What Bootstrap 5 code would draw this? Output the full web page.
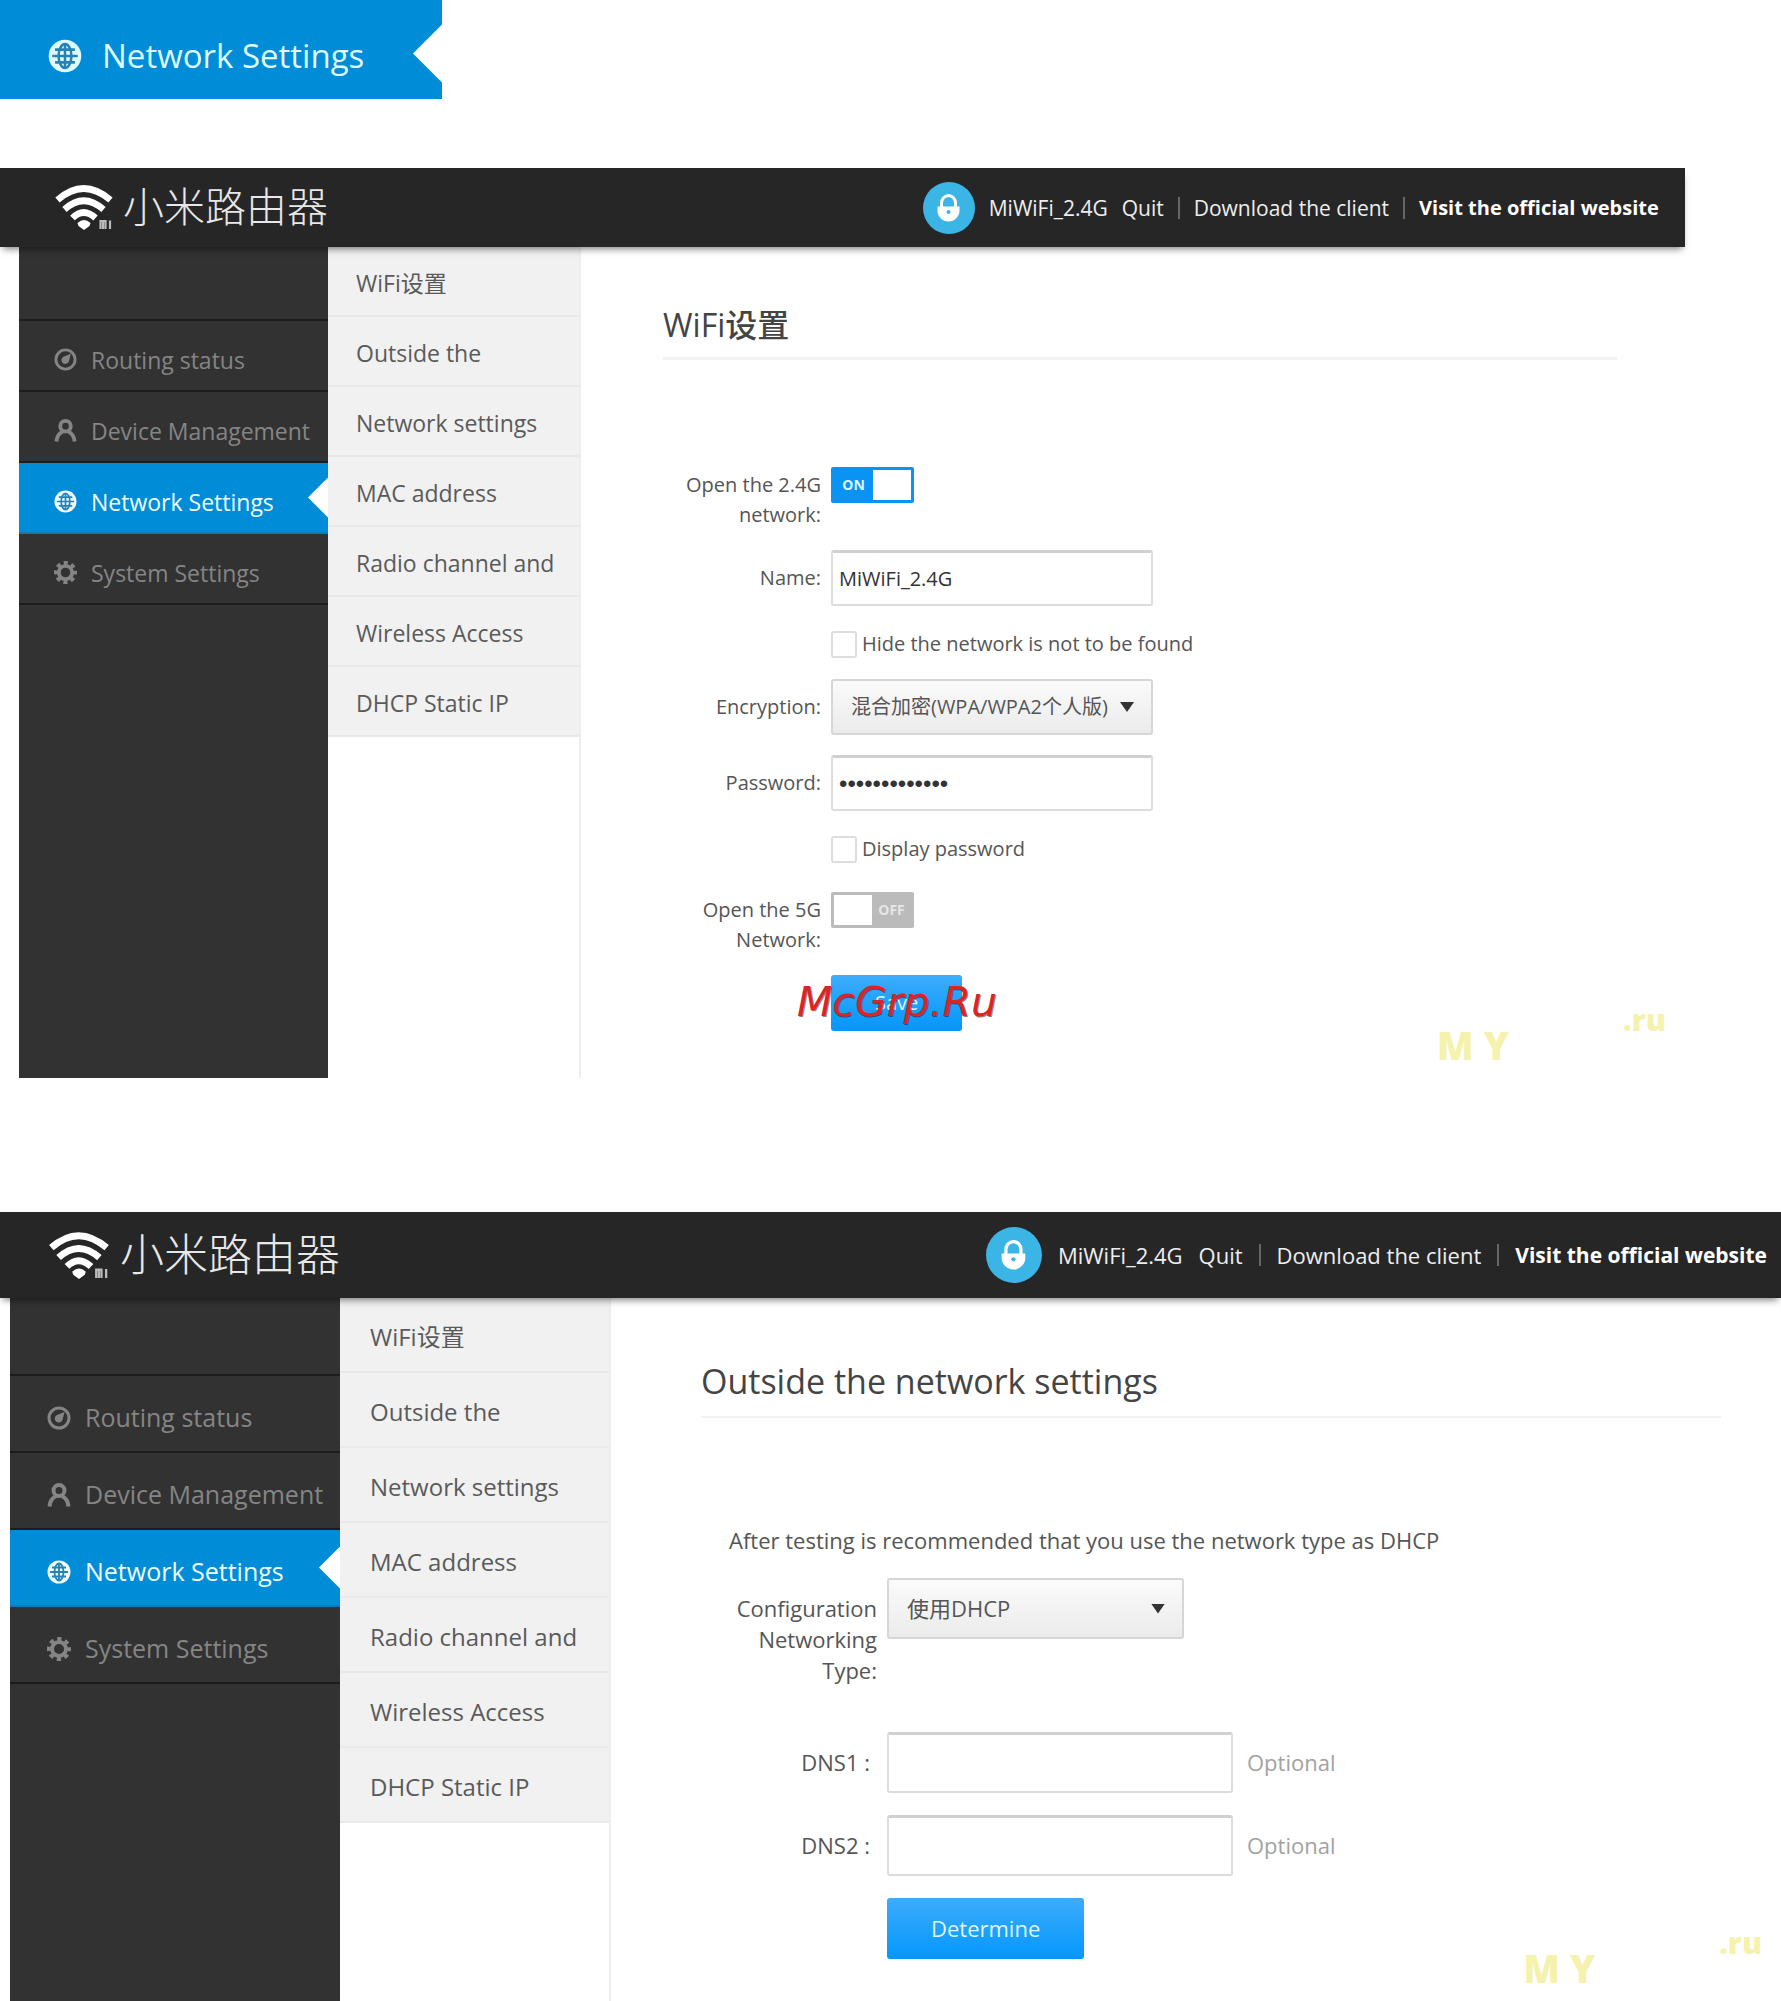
<!DOCTYPE html>
<html lang="en">
<head>
<meta charset="utf-8">
<meta name="viewport" content="width=device-width, initial-scale=1">
<title>Network Settings</title>
<link href="https://cdn.jsdelivr.net/npm/bootstrap@5.3.0/dist/css/bootstrap.min.css" rel="stylesheet">
<style>
  body { font-family: "Open Sans", "Noto Sans CJK SC", sans-serif; background: #fff; color: #555; }
  a { text-decoration: none; color: inherit; }
  svg { flex: none; }

  .crumb { background: #008cd7; color: #dffaff; width: 442px; height: 99px; padding: 13px 0 0 48px; font-size: 33px; gap: 20px; }
  .notched { position: relative; }
  .notched::after { content: ""; position: absolute; right: 0; top: calc(50% + var(--notch-shift, 0px)); width: var(--notch); height: calc(var(--notch) * 2); transform: translateY(-50%); background: #fff; clip-path: polygon(100% 0, 0 50%, 100% 100%); }

  .router { --text: 20px; --toptext: 21px; --topbold: 20px; --label: 158px; --bar: 79px; --row: 71px; --side: 309px; --sub: 253px; --nav: 23px; --subnav: 23px; --edge: 19px; --field: 56px; --lh: 30px; --gap: 20px; --notch: 20px; font-size: var(--text); line-height: var(--lh); }
  .router-wide { --text: 22px; --toptext: 22px; --topbold: 21px; --label: 176px; --bar: 86px; --row: 77px; --side: 330px; --sub: 271px; --nav: 25px; --subnav: 24px; --edge: 10px; --field: 61px; --lh: 31px; --gap: 22px; --notch: 21px; }
  .router-narrow { width: 94.6%; margin-top: 69px; min-height: 910px; }
  .router-wide { margin-top: 134px; }

  .topbar { background: #262626; color: #eee; height: var(--bar); position: relative; z-index: 2; box-shadow: 0 5px 7px -3px rgba(0,0,0,.5); padding: 0 26px 0 55px; }
  .router-wide .topbar { padding: 0 14px 0 48px; }
  .brand { font-family: "Noto Sans CJK SC", sans-serif; font-weight: 300; font-size: 41px; line-height: 50px; color: #e8e8e8; gap: 10px; }
  .brand span { padding-bottom: 7px; }
  .router-wide .brand { font-size: 44px; }
  .user { gap: 14px; font-size: var(--toptext); }
  .router-wide .user { gap: 16px; }
  .user .fw-bold { font-size: var(--topbold); }
  .sep { width: 2px; height: 22px; background: #666; }

  .side { width: var(--side); margin-left: var(--edge); background: #323232; color: #858585; font-size: var(--nav); }
  .side > * { height: var(--row); border-bottom: 2px solid #1d1d1d; }
  .side > .blank { height: calc(var(--row) + 3px); }
  .router-wide .side > .blank { height: calc(var(--row) + 1px); }
  .side a { gap: 14px; padding: 8px 0 0 35px; white-space: nowrap; }
  .router-wide .side a { padding-left: 37px; }
  .side a.current { background: #008cd7; color: #effcff; border-bottom-color: #0a7bb8; }
  .sub { width: var(--sub); border-right: 2px solid #eee; font-size: var(--subnav); color: #5a5a5a; }
  .sub a { height: calc(var(--row) - 1px); background: #f1f1f1; border-bottom: 2px solid #e9e9e9; padding: 4px 0 0 28px; }
  .router-wide .sub a { height: calc(var(--row) - 2px); padding-left: 30px; }

  .pane { margin: 54px 68px 0 82px; }
  .router-wide .pane { margin: 58px 60px 0 90px; }
  .pane h1 { font-size: 32px; line-height: 48px; color: #444; margin: 0; padding-bottom: 8px; border-bottom: 3px solid #f2f2f2; }
  .router-wide .pane h1 { font-size: 34px; line-height: 50px; padding-bottom: 10px; border-width: 2px; }
  .pane form { margin-top: 107px; gap: var(--gap); }
  .router-wide .pane form { margin-top: 107px; }
  .line { gap: 10px; }
  .caption { width: var(--label); text-align: right; flex: none; }
  .router-narrow .caption { padding: 13px 0; }
  .router-narrow .caption.two { padding: 3px 0 0 18px; }
  .router-wide .caption { padding: 15px 0 0 20px; }
  .router-wide .dns { padding-right: 7px; }
  .field { height: var(--field); border: 2px solid #dcdcdc; border-top: 3px solid #d0d0d0; border-radius: 3px; padding: 0 6px; font-size: var(--text); color: #333; }
  .w-a { width: 322px; } .w-b { width: 346px; } .w-c { width: 297px; }
  .secret { font-family: "Liberation Sans", sans-serif; font-size: 24px; }
  .picker { position: relative; }
  .picker select { appearance: none; width: 100%; background: linear-gradient(#fbfbfb, #ebebeb); border: 2px solid #d6d6d6; padding: 0 42px 0 18px; color: #555; overflow: hidden; }
  .picker::after { content: ""; position: absolute; right: 19px; top: calc(50% - 5px); width: 14px; height: 10px; background: #333; clip-path: polygon(0 0, 100% 0, 50% 100%); pointer-events: none; }
  .tick { padding-top: 2px; margin-left: calc(var(--label) + 10px); height: 33px; gap: 5px; }
  .tick input { appearance: none; width: 26px; height: 27px; border: 2px solid #ddd; border-radius: 3px; background: #fff; margin: 2px 0 0; }
  .toggle { width: 83px; height: 36px; border: 3px solid #0a93f2; background: #0a93f2; border-radius: 2px; color: #d9f5ff; font-size: 14px; font-weight: 700; }
  .toggle input { appearance: none; width: 38px; background: #fff; margin: 0; }
  .toggle span { width: 39px; text-align: center; }
  .toggle.off { background: #bbb; border-color: #bbb; color: #e6e6e6; flex-direction: row-reverse; }
  .go { height: var(--field); margin-left: calc(var(--label) + 10px); padding: 0 44px; border: 0; border-radius: 3px; background: linear-gradient(#3dacfd, #0397fc); color: #dff5ff; font-size: var(--text); }
  .optional { color: #a2a2a2; }
  .stamp { position: absolute; left: -34px; top: 0; font: italic 41px/54px "DejaVu Sans", sans-serif; color: #dc2424; text-shadow: 1px 1px 0 rgba(60,0,0,.5); pointer-events: none; margin-left: calc(var(--label) + 10px); }
  .faint { position: absolute; right: 19px; bottom: 12px; gap: 114px; color: #f5f2ae; font-weight: 800; pointer-events: none; }
  .router-wide .faint { gap: 124px; }
  .faint b { font-size: 38px; line-height: 42px; }
  .faint i { font: 800 30px/24px "Open Sans", sans-serif; }
</style>
</head>
<body class="d-flex flex-column min-vh-100">

<svg class="d-none" aria-hidden="true">
  <symbol id="globe" viewBox="0 0 24 24">
    <circle cx="12" cy="12" r="11.500" fill="currentColor"/>
    <g fill="none" stroke="#2783b5" stroke-width="1.800"><ellipse cx="12" cy="12" rx="4.500" ry="8.500"/><path d="M12 3.500v17M3 12h18M5 7.500h14M5 16.500h14"/></g>
  </symbol>
  <symbol id="gauge" viewBox="0 0 24 24">
    <circle cx="12" cy="12" r="10" fill="none" stroke="currentColor" stroke-width="3"/>
    <path d="M17.500 6 15.500 14a4 4 0 1 1-5.500-5z" fill="currentColor"/>
  </symbol>
  <symbol id="person" viewBox="0 0 24 24">
    <g fill="none" stroke="currentColor" stroke-width="4"><circle cx="12" cy="7.500" r="5.500"/><path d="M2.500 23.500c.5-6 3-9 7-10.500M21.500 23.500c-.5-6-3-9-7-10.500"/></g>
  </symbol>
  <symbol id="gear" viewBox="0 0 24 24">
    <g fill="none" stroke="currentColor"><circle cx="12" cy="12" r="7" stroke-width="4"/><circle cx="12" cy="12" r="10" stroke-width="4" stroke-dasharray="4.200 3.654" stroke-dashoffset="2.100"/></g>
  </symbol>
  <symbol id="waves" viewBox="0 0 57 45">
    <g fill="none" stroke="#fff" stroke-width="6.500"><path d="M2 15Q28 -8 55 15"/><path d="M9 24.500Q28 7 48 24.500"/><path d="M17 33Q28 22 40 33"/></g>
    <path d="M22 38q6.500-6 13 0l-1 3-5.500 4-5.500-4z" fill="#fff"/>
    <path d="M45 44v-8h5v8M47.500 37v7M54.500 35.500v8.500" fill="none" stroke="#bbb" stroke-width="2.200"/>
  </symbol>
  <symbol id="lock" viewBox="0 0 52 52">
    <circle cx="26" cy="26" r="26" fill="#3bb4e6"/>
    <path d="M18.500 26v-5a7 7.500 0 0 1 14 0v5" fill="none" stroke="#fff" stroke-width="3"/>
    <path d="M14.500 24.500h22v4a11 11 0 0 1-22 0z" fill="#fff"/>
    <circle cx="25.500" cy="30" r="2" fill="#3bb4e6"/>
  </symbol>
</svg>

<div class="crumb notched d-flex align-items-center" style="--notch:29px;--notch-shift:4px">
  <svg width="34" height="34"><use href="#globe"/></svg><span>Network Settings</span>
</div>

<section class="router router-narrow d-flex flex-column">
  <header class="topbar d-flex align-items-center justify-content-between">
    <a href="#" class="brand d-flex align-items-center"><svg width="58" height="45"><use href="#waves"/></svg><span>小米路由器</span></a>
    <nav class="user d-flex align-items-center">
      <svg width="52" height="52"><use href="#lock"/></svg>
      <span>MiWiFi_2.4G</span><a href="#">Quit</a><span class="sep"></span><a href="#">Download the client</a><span class="sep"></span><a href="#" class="fw-bold text-white">Visit the official website</a>
    </nav>
  </header>
  <div class="d-flex flex-grow-1 position-relative">
    <nav class="side flex-shrink-0">
      <div class="blank"></div>
      <a href="#" class="d-flex align-items-center"><svg width="23" height="23"><use href="#gauge"/></svg>Routing status</a>
      <a href="#" class="d-flex align-items-center"><svg width="23" height="23"><use href="#person"/></svg>Device Management</a>
      <a href="#" class="current notched d-flex align-items-center"><svg width="23" height="23"><use href="#globe"/></svg>Network Settings</a>
      <a href="#" class="d-flex align-items-center"><svg width="23" height="23"><use href="#gear"/></svg>System Settings</a>
    </nav>
    <nav class="sub flex-shrink-0">
      <a href="#" class="d-flex align-items-center">WiFi设置</a>
      <a href="#" class="d-flex align-items-center">Outside the</a>
      <a href="#" class="d-flex align-items-center">Network settings</a>
      <a href="#" class="d-flex align-items-center">MAC address</a>
      <a href="#" class="d-flex align-items-center">Radio channel and</a>
      <a href="#" class="d-flex align-items-center">Wireless Access</a>
      <a href="#" class="d-flex align-items-center">DHCP Static IP</a>
    </nav>
    <main class="pane flex-grow-1">
      <h1>WiFi设置</h1>
      <form class="d-flex flex-column">
        <div class="line d-flex align-items-start">
          <label class="caption two" for="g24">Open the 2.4G network:</label>
          <div class="toggle d-flex align-items-stretch"><span>ON</span><input type="checkbox" role="switch" id="g24" checked></div>
        </div>
        <div class="line d-flex align-items-start">
          <label class="caption" for="ssid">Name:</label>
          <input class="field w-a" id="ssid" type="text" value="MiWiFi_2.4G">
        </div>
        <div class="tick d-flex align-items-center"><input type="checkbox" id="hide"><label for="hide">Hide the network is not to be found</label></div>
        <div class="line d-flex align-items-start">
          <label class="caption" for="enc">Encryption:</label>
          <div class="picker w-a"><select class="field" id="enc"><option>混合加密(WPA/WPA2个人版)</option></select></div>
        </div>
        <div class="line d-flex align-items-start">
          <label class="caption" for="pw">Password:</label>
          <input class="field w-a secret" id="pw" type="password" value="1234567890123">
        </div>
        <div class="tick d-flex align-items-center"><input type="checkbox" id="show"><label for="show">Display password</label></div>
        <div class="line d-flex align-items-start mt-2">
          <label class="caption two" for="g5">Open the 5G Network:</label>
          <div class="toggle off d-flex align-items-stretch"><span>OFF</span><input type="checkbox" role="switch" id="g5"></div>
        </div>
        <div class="position-relative">
          <button type="button" class="go">Save</button>
          <span class="stamp">McGrp.Ru</span>
        </div>
      </form>
    </main>
    <div class="faint d-flex align-items-start"><b class="mt-3">M Y</b><i>.ru</i></div>
  </div>
</section>

<section class="router router-wide d-flex flex-column flex-grow-1">
  <header class="topbar d-flex align-items-center justify-content-between">
    <a href="#" class="brand d-flex align-items-center"><svg width="62" height="47"><use href="#waves"/></svg><span>小米路由器</span></a>
    <nav class="user d-flex align-items-center">
      <svg width="56" height="56"><use href="#lock"/></svg>
      <span>MiWiFi_2.4G</span><a href="#">Quit</a><span class="sep"></span><a href="#">Download the client</a><span class="sep"></span><a href="#" class="fw-bold text-white">Visit the official website</a>
    </nav>
  </header>
  <div class="d-flex flex-grow-1 position-relative">
    <nav class="side flex-shrink-0">
      <div class="blank"></div>
      <a href="#" class="d-flex align-items-center"><svg width="24" height="24"><use href="#gauge"/></svg>Routing status</a>
      <a href="#" class="d-flex align-items-center"><svg width="24" height="24"><use href="#person"/></svg>Device Management</a>
      <a href="#" class="current notched d-flex align-items-center"><svg width="24" height="24"><use href="#globe"/></svg>Network Settings</a>
      <a href="#" class="d-flex align-items-center"><svg width="24" height="24"><use href="#gear"/></svg>System Settings</a>
    </nav>
    <nav class="sub flex-shrink-0">
      <a href="#" class="d-flex align-items-center">WiFi设置</a>
      <a href="#" class="d-flex align-items-center">Outside the</a>
      <a href="#" class="d-flex align-items-center">Network settings</a>
      <a href="#" class="d-flex align-items-center">MAC address</a>
      <a href="#" class="d-flex align-items-center">Radio channel and</a>
      <a href="#" class="d-flex align-items-center">Wireless Access</a>
      <a href="#" class="d-flex align-items-center">DHCP Static IP</a>
    </nav>
    <main class="pane flex-grow-1">
      <h1>Outside the network settings</h1>
      <form class="d-flex flex-column">
        <p class="mb-0 ms-4 ps-1">After testing is recommended that you use the network type as DHCP</p>
        <div class="line d-flex align-items-start mb-4">
          <label class="caption" for="net">Configuration Networking Type:</label>
          <div class="picker w-c"><select class="field" id="net"><option>使用DHCP</option></select></div>
        </div>
        <div class="line d-flex align-items-start">
          <label class="caption dns" for="dns1">DNS1 :</label>
          <input class="field w-b" id="dns1" type="text">
          <span class="optional align-self-center ms-1">Optional</span>
        </div>
        <div class="line d-flex align-items-start">
          <label class="caption dns" for="dns2">DNS2 :</label>
          <input class="field w-b" id="dns2" type="text">
          <span class="optional align-self-center ms-1">Optional</span>
        </div>
        <div><button type="button" class="go">Determine</button></div>
      </form>
    </main>
    <div class="faint d-flex align-items-start"><b class="mt-3">M Y</b><i>.ru</i></div>
  </div>
</section>

<script src="https://cdn.jsdelivr.net/npm/bootstrap@5.3.0/dist/js/bootstrap.bundle.min.js"></script>
</body>
</html>
